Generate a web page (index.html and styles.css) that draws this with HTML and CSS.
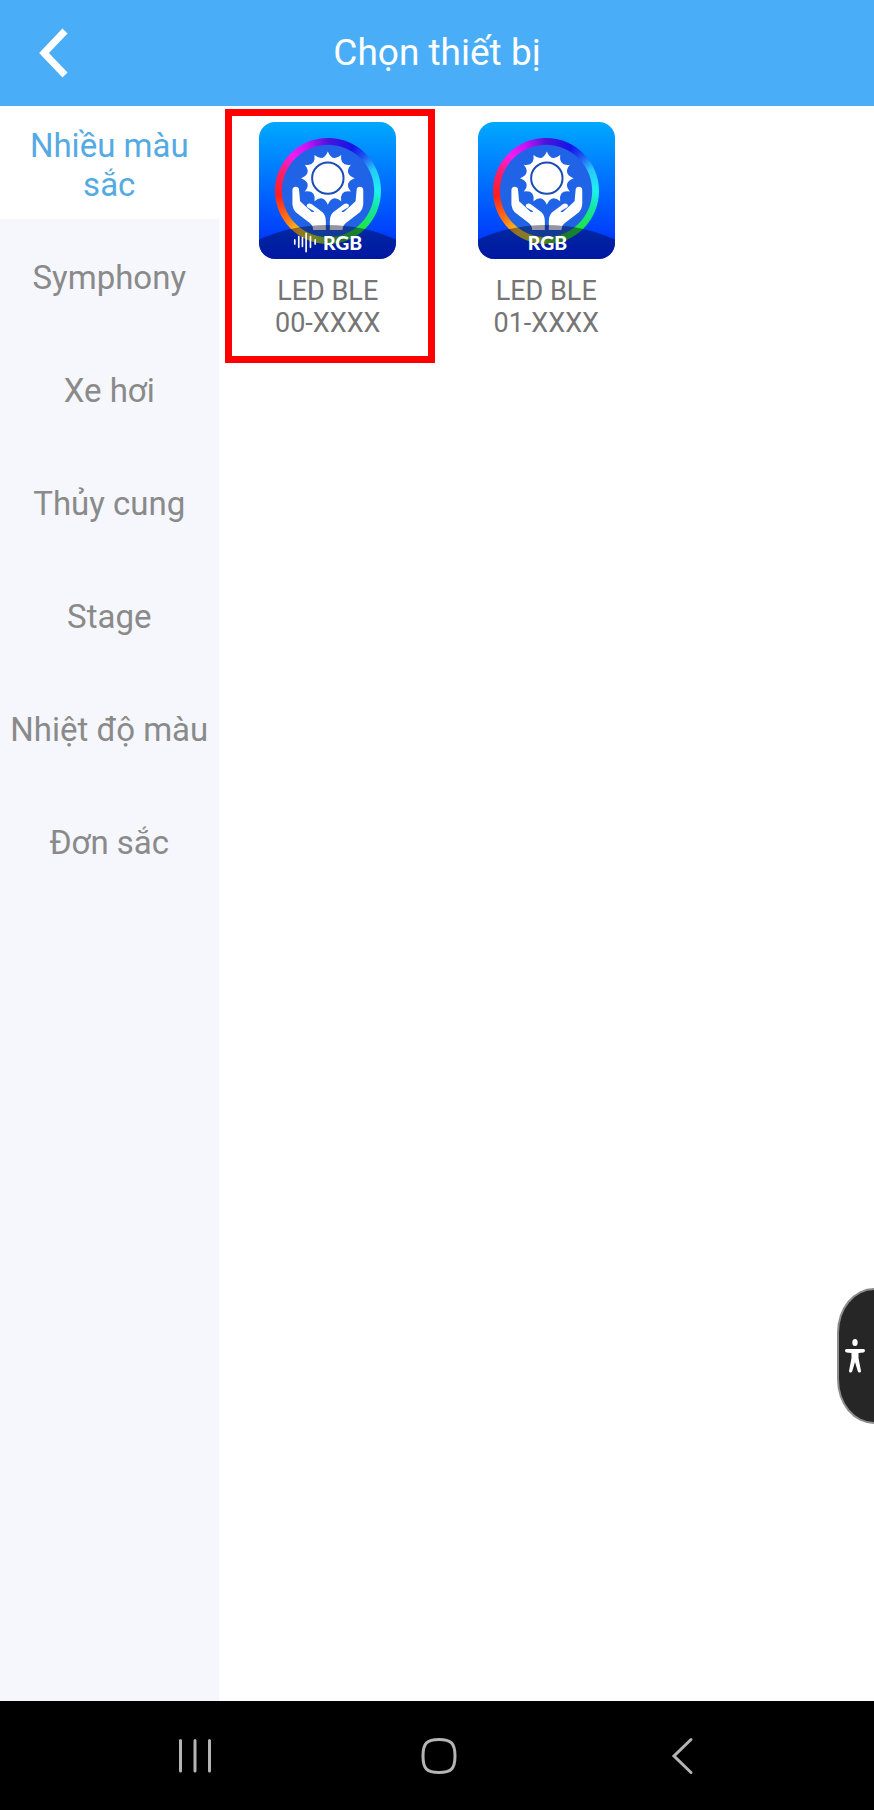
FILE: index.html
```html
<!DOCTYPE html>
<html lang="vi">
<head>
  <meta charset="UTF-8">
  <meta name="viewport" content="width=device-width, initial-scale=1">
  <title>Chọn thiết bị</title>
  <link rel="stylesheet" href="styles.css">
</head>
<body>
  <!-- shared shapes -->
  <svg class="defs" aria-hidden="true">
    <symbol id="sun-hands" viewBox="0 0 410 410">
      <g transform="translate(206 168)">
        <path fill="#fff" d="M0-80Q13-47 40-69Q35-35 69-40Q47-13 80 0Q47 13 69 40Q35 35 40 69Q13 47 0 80Q-13 47-40 69Q-35 35-69 40Q-47 13-80 0Q-47-13-69-40Q-35-35-40-69Q-13-47 0-80Z"/>
        <circle r="60" fill="#fff"/>
        <circle r="47" fill="none" stroke="#1c4cb8" stroke-width="6"/>
      </g>
      <path id="hand" fill="#fff" d="M100 205Q100 194 110 194Q120 194 120 205L123 237L158 269Q163 271 165 267L146 256Q140 250 145 246Q151 242 158 246L190 270Q200 280 200 296V323H162Q162 310 152 302L110 270Q101 260 100 248Z"/>
      <use href="#hand" transform="translate(412 0) scale(-1 1)"/>
      <path fill="#000028" fill-opacity=".42" d="M0 352Q95 308 205 308T410 352V410H0Z"/>
    </symbol>
  </svg>

  <header class="header">
    <button class="back" aria-label="Quay lại">
      <svg width="30" height="52" viewBox="0 0 30 52"><path d="M27 4L6 26L27 48" fill="none" stroke="#fff" stroke-width="7"/></svg>
    </button>
    <h1>Chọn thiết bị</h1>
  </header>

  <main class="content">
    <nav class="menu">
      <a class="active" href="#">Nhiều màu sắc</a>
      <a href="#">Symphony</a>
      <a href="#">Xe hơi</a>
      <a href="#">Thủy cung</a>
      <a href="#">Stage</a>
      <a href="#">Nhiệt độ màu</a>
      <a href="#">Đơn sắc</a>
    </nav>
    <section class="devices">
      <a class="device selected" href="#">
        <span class="icon">
          <svg viewBox="0 0 410 410">
            <use href="#sun-hands"/>
            <path d="M107 353v12M119 343v32M130 346v26M141 333v55M154 343v32M168 353v12" stroke="#fff" stroke-width="5" stroke-linecap="round"/>
            <text x="250" y="384" text-anchor="middle">RGB</text>
          </svg>
        </span>
        <span class="name">LED BLE<br>00-XXXX</span>
      </a>
      <a class="device" href="#">
        <span class="icon">
          <svg viewBox="0 0 410 410">
            <use href="#sun-hands"/>
            <text x="208" y="384" text-anchor="middle">RGB</text>
          </svg>
        </span>
        <span class="name">LED BLE<br>01-XXXX</span>
      </a>
    </section>
  </main>

  <button class="accessibility" aria-label="Trợ năng">
    <svg width="20" height="34" viewBox="0 0 20 34" fill="#fff">
      <ellipse cx="10" cy="3.5" rx="2.7" ry="3.5"/>
      <path d="M1.500 10H18.500Q20 10 20 11.500T18.500 13.500L13.500 14V19L16 32Q16 33.500 14.500 33.500T12.700 32L10 23L7.300 32Q7 33.500 5.500 33.500T4 32L6.500 19V14L1.500 13.500Q0 13 0 11.500T1.500 10Z"/>
    </svg>
  </button>

  <footer class="navbar">
    <button aria-label="Gần đây">
      <svg width="36" height="38" viewBox="0 0 36 38"><path d="M3.500 3.500V34M18 3.500V34M32.500 3.500V34"/></svg>
    </button>
    <button aria-label="Trang chủ">
      <svg width="38" height="38" viewBox="0 0 38 38"><path d="M19 2.500C31 2.500 35 6 35 19S31 35.500 19 35.500S3 32 3 19S7 2.500 19 2.500Z"/></svg>
    </button>
    <button aria-label="Trở lại">
      <svg width="24" height="38" viewBox="0 0 24 38"><path d="M20 2.500L3 19L20 35.500"/></svg>
    </button>
  </footer>
</body>
</html>
```

FILE: styles.css
```css
* {
  box-sizing: border-box;
}
body {
  margin: 0;
  min-height: 100vh;
  display: flex;
  flex-direction: column;
  background-color: #fff;
  font-family: Roboto, sans-serif;
}
button {
  padding: 0;
  border: none;
  background: none;
  cursor: pointer;
}
a {
  color: inherit;
  text-decoration: none;
}
svg {
  display: block;
}
.defs {
  position: absolute;
  width: 0;
  height: 0;
}

/* top bar */
.header {
  display: grid;
  grid-template-columns: 106px 1fr 106px;
  align-items: center;
  height: 106px;
  background-color: #4aadf7;
  color: #fff;
}
.back {
  justify-self: center;
}
.header h1 {
  margin: 0;
  font-size: 37px;
  font-weight: 400;
  line-height: 48px;
  text-align: center;
}

/* categories on the left, devices on the right */
.content {
  flex: 1;
  display: grid;
  grid-template-columns: 1fr 3fr;
}
.menu {
  background-color: #f5f7fc;
  color: #8a8a8a;
}
.menu a {
  display: flex;
  align-items: center;
  justify-content: center;
  min-height: 113px;
  padding: 4px 8px 0;
  font-size: 33px;
  line-height: 39px;
  text-align: center;
}
.menu .active {
  background-color: #fff;
  color: #54aae2;
}
.devices {
  display: grid;
  grid-template-columns: repeat(3, 1fr);
  align-content: start;
}
.device {
  position: relative;
  display: flex;
  flex-direction: column;
  align-items: center;
  padding: 16px 0 24px;
}
.selected::after {
  content: "";
  position: absolute;
  inset: 3px 2px 0 6px;
  border: 7px solid #f00;
}
.icon {
  display: grid;
  width: 137px;
  height: 137px;
  border-radius: 16px;
  overflow: hidden;
  background: linear-gradient(#00a9ff, #0068ff 50%, #0028f8);
}
.icon::before {
  content: "";
  grid-area: 1 / 1;
  place-self: center;
  width: 106px;
  height: 106px;
  border-radius: 50%;
  background:
    radial-gradient(closest-side, #2163e6 86%, transparent 88%),
    conic-gradient(#4a14dc, #1414e8 30deg, #1e50f0 45deg, #28c8fa 65deg, #1ef0f0 90deg, #14e6a0 110deg, #1ee63c 140deg, #3cc828 165deg, #c8e61e 195deg, #ffc81e 215deg, #ff7814 235deg, #ff1e1e 265deg, #ff1e64 290deg, #f01ef0 315deg, #c814f5 335deg, #4a14dc);
}
.icon svg {
  grid-area: 1 / 1;
  z-index: 1;
}
.icon text {
  fill: #fff;
  font-family: Lato, sans-serif;
  font-size: 58px;
  font-weight: 900;
}
.name {
  margin-top: 16px;
  color: #757575;
  font-size: 27px;
  line-height: 32px;
  text-align: center;
}

/* floating button at the screen edge */
.accessibility {
  position: fixed;
  right: 0;
  top: 1288px;
  display: flex;
  align-items: center;
  width: 37px;
  height: 136px;
  padding-left: 6px;
  border: 2px solid #8c8c8c;
  border-right: none;
  border-radius: 40px 0 0 40px / 48px 0 0 48px;
  background-color: #262626;
}

/* system navigation */
.navbar {
  display: flex;
  justify-content: center;
  height: 109px;
  padding-left: 4px;
  background-color: #000;
}
.navbar button {
  display: flex;
  align-items: center;
  justify-content: center;
  width: 28%;
}
.navbar svg {
  fill: none;
  stroke: #b4b4b4;
  stroke-width: 3px;
  stroke-linecap: round;
}
```
